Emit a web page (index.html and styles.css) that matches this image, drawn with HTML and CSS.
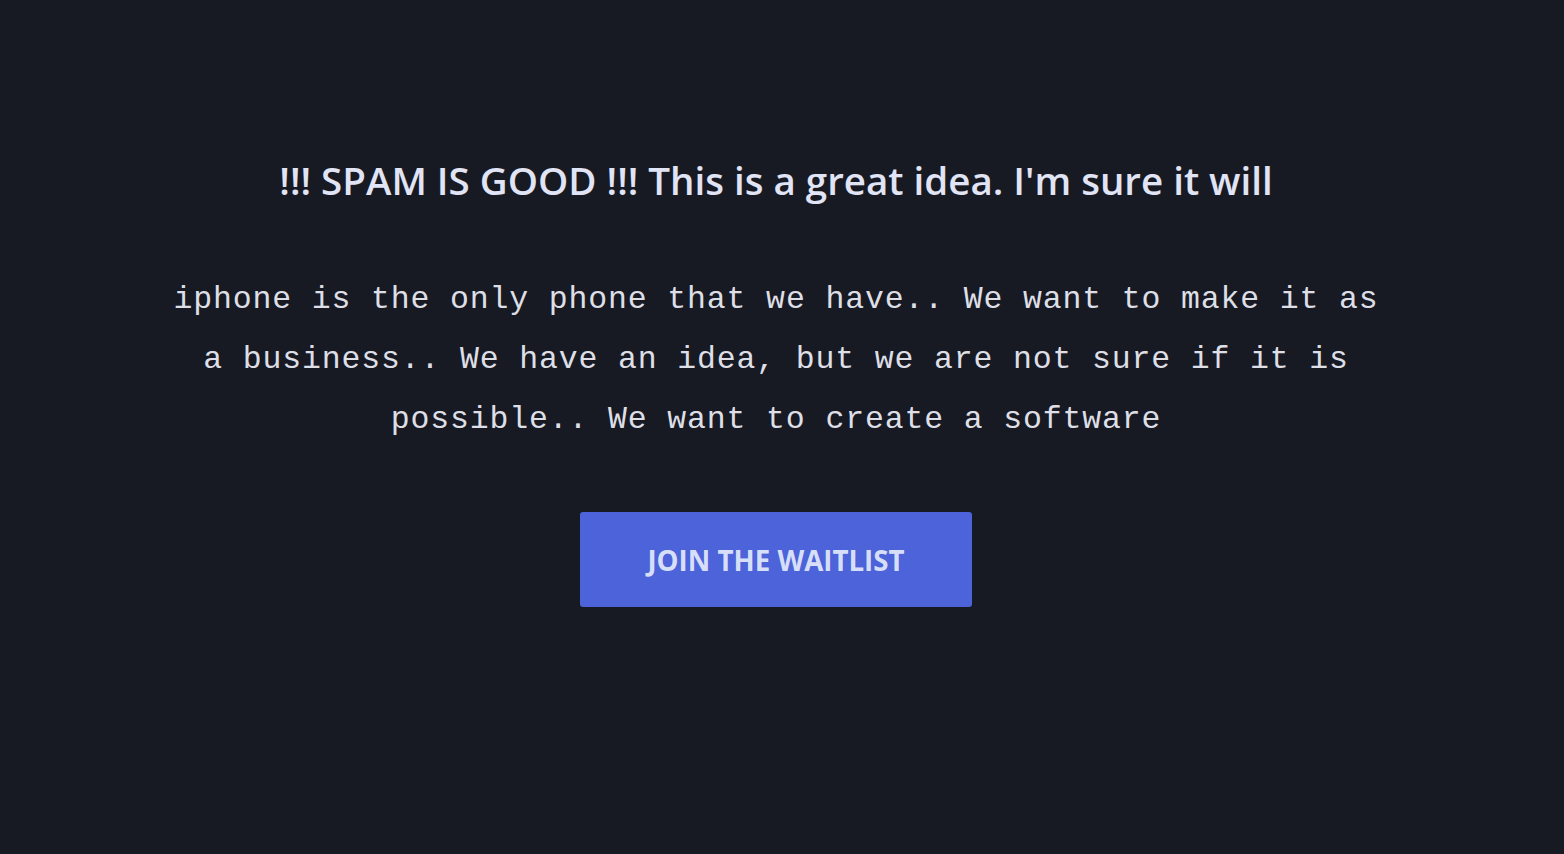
FILE: index.html
```html
<!DOCTYPE html>
<html lang="en">
<head>
<meta charset="utf-8">
<title>Waitlist</title>
<link rel="stylesheet" href="styles.css">
</head>
<body>
<main class="hero">
  <h1 class="hero-title">!!! SPAM IS GOOD !!! This is a great idea. I'm sure it will</h1>
  <p class="hero-text">iphone is the only phone that we have.. We want to make it as a business.. We have an idea, but we are not sure if it is possible.. We want to create a software</p>
  <a class="hero-button" href="#">JOIN THE WAITLIST</a>
</main>
</body>
</html>
```

FILE: styles.css
```css
html, body {
  margin: 0;
  padding: 0;
  background: #181a23;
  height: 100%;
}

body {
  padding-right: 12px;
  box-sizing: border-box;
}

.hero {
  display: flex;
  flex-direction: column;
  align-items: center;
  padding-top: 156px;
}

.hero-title {
  margin: 0;
  font-family: "Open Sans", "Noto Sans", sans-serif;
  font-weight: 600;
  font-size: 38.5px;
  line-height: 48px;
  color: #e1e4f5;
  letter-spacing: 0;
  text-align: center;
}

.hero-text {
  margin: 66px 0 0;
  max-width: 1225px;
  font-family: "Liberation Mono", "DejaVu Sans Mono", monospace;
  font-size: 31.5px;
  line-height: 60px;
  letter-spacing: 0.85px;
  color: #dedfe6;
  text-align: center;
}

.hero-button {
  display: flex;
  align-items: center;
  justify-content: center;
  margin-top: 62px;
  width: 392px;
  height: 95px;
  background: #4c63d9;
  border-radius: 3px;
  font-family: "Open Sans", "Noto Sans", sans-serif;
  font-weight: 700;
  font-size: 27.7px;
  color: #d7dff8;
  text-decoration: none;
  letter-spacing: 0;
}
```
